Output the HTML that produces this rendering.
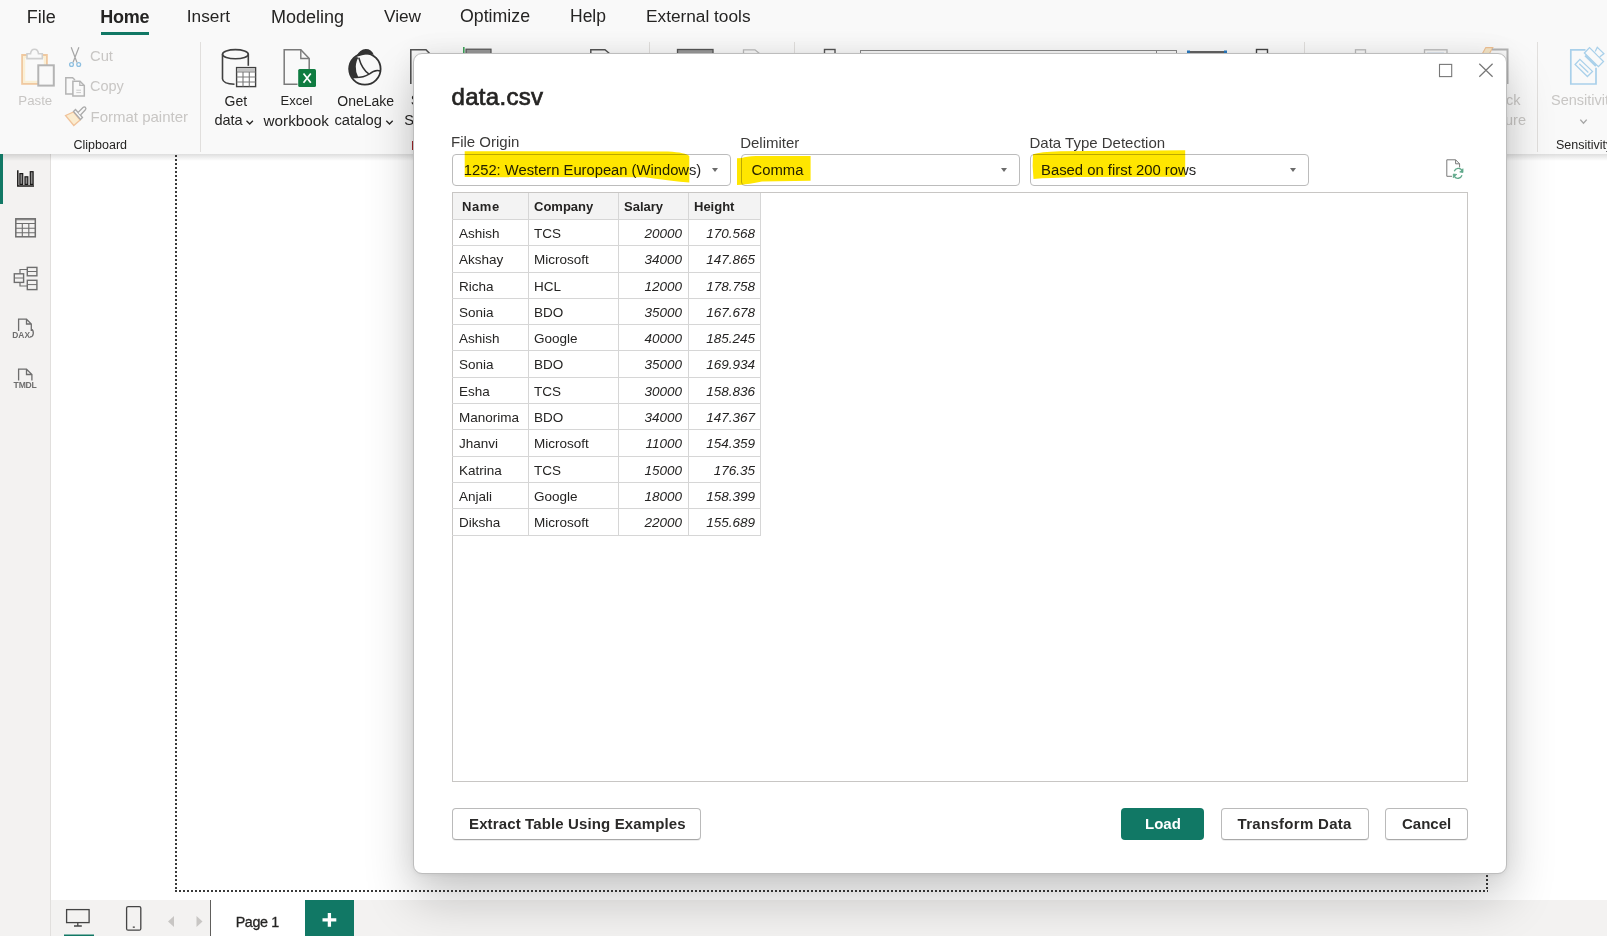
<!DOCTYPE html>
<html><head><meta charset="utf-8">
<style>
*{margin:0;padding:0;box-sizing:border-box;}
html,body{width:1607px;height:936px;overflow:hidden;}
body{position:relative;background:#fff;font-family:"Liberation Sans",sans-serif;color:#252423;}
.abs{position:absolute;}
.t{position:absolute;white-space:nowrap;line-height:1;}
#ribbon{position:absolute;left:0;top:0;width:1607px;height:154px;background:#f9f9f9;}
#ribshadow{position:absolute;left:0;top:154px;width:1607px;height:7px;background:linear-gradient(rgba(0,0,0,0.13),rgba(0,0,0,0));}
#sidebar{position:absolute;left:0;top:154px;width:51px;height:782px;background:#f3f2f1;border-right:1px solid #e1dfdd;}
#canvas{position:absolute;left:51px;top:154px;width:1556px;height:746px;background:#fff;}
#bottombar{position:absolute;left:51px;top:900px;width:1556px;height:36px;background:#f3f2f1;}
.sep{position:absolute;width:1px;background:#e1dfdd;}
.rt{position:absolute;white-space:nowrap;line-height:1;color:#c8c6c4;font-size:15px;}
.rd{position:absolute;white-space:nowrap;line-height:1;color:#252423;font-size:15px;}
#dialog{position:absolute;left:413px;top:53px;width:1094px;height:821px;background:#fff;border:1px solid #bdbdbd;border-radius:9px;
 box-shadow:0 26px 50px rgba(0,0,0,0.2),0 0 26px rgba(0,0,0,0.07),0 1px 4px rgba(0,0,0,0.06);}
.lbl{position:absolute;font-size:15px;color:#3b3a39;white-space:nowrap;line-height:1;}
.dd{position:absolute;top:154px;height:32px;border:1px solid #bcbcbc;border-radius:4px;background:#fff;}
.ddt{position:absolute;font-size:15px;color:#252423;white-space:nowrap;line-height:1;}
.arr{position:absolute;width:0;height:0;border-left:3.7px solid transparent;border-right:3.7px solid transparent;border-top:4.5px solid #6b6b6b;}
.btn{position:absolute;top:808px;height:32px;border:1px solid #bababa;border-bottom-color:#a8a8a8;border-radius:4px;background:#fff;box-shadow:0 1px 0.5px rgba(0,0,0,0.07);}
.btnt{position:absolute;font-weight:bold;font-size:15px;color:#2b2a29;white-space:nowrap;line-height:1;}
.hl{position:absolute;left:452px;width:309px;height:1px;background:#d6d6d6;}
.vl{position:absolute;top:193px;width:1px;height:342px;background:#d6d6d6;}
.th{position:absolute;font-weight:bold;font-size:13px;color:#252423;white-space:nowrap;line-height:1;}
.td{position:absolute;font-size:13.5px;color:#252423;white-space:nowrap;line-height:1;}
.tn{position:absolute;font-style:italic;font-size:13.5px;color:#252423;white-space:nowrap;line-height:1;}
</style></head>
<body>
<div id="ribbon"></div>
<div id="sidebar"></div>
<div id="canvas"></div>
<div id="ribshadow"></div>
<div id="bottombar"></div>

<!-- green active bar -->
<div class="abs" style="left:0;top:154px;width:3px;height:50px;background:#117865;"></div>
<!-- sidebar icons -->
<svg class="abs" style="left:0;top:154px;" width="51" height="250" viewBox="0 154 51 250">
 <path d="M17.8 170.3 V186 H34" fill="none" stroke="#1b1a19" stroke-width="1.5"/>
 <rect x="19.9" y="173.6" width="2.8" height="10.8" fill="#8a8a8a" stroke="#1b1a19" stroke-width="1.2"/>
 <rect x="25" y="176.8" width="2.8" height="7.6" fill="#8a8a8a" stroke="#1b1a19" stroke-width="1.2"/>
 <rect x="30.3" y="171.7" width="2.8" height="12.7" fill="#8a8a8a" stroke="#1b1a19" stroke-width="1.2"/>
 <rect x="15.8" y="218.8" width="19.5" height="18" fill="none" stroke="#6e6e6e" stroke-width="1.5"/>
 <path d="M16 223.5 H35 M16 228.3 H35 M16 232.8 H35 M22.3 223.5 V236.8 M28.8 223.5 V236.8" stroke="#6e6e6e" stroke-width="1.1"/>
 <path d="M16 219.8 H35" stroke="#6e6e6e" stroke-width="0.8"/>
 <rect x="14.3" y="273.8" width="9.3" height="8.6" fill="none" stroke="#6e6e6e" stroke-width="1.4"/>
 <path d="M14.3 278 H23.6" stroke="#6e6e6e" stroke-width="1"/>
 <rect x="27.3" y="267.4" width="9.6" height="8.4" fill="none" stroke="#6e6e6e" stroke-width="1.4"/>
 <path d="M27.3 271.5 H36.9" stroke="#6e6e6e" stroke-width="1"/>
 <rect x="27.3" y="280.3" width="9.6" height="9.3" fill="none" stroke="#6e6e6e" stroke-width="1.4"/>
 <path d="M27.3 284.6 H36.9" stroke="#6e6e6e" stroke-width="1"/>
 <path d="M20 273.8 V269.5 H27.3 M20 282.4 V286 H27.3" fill="none" stroke="#6e6e6e" stroke-width="1.2"/>
 <path d="M18.6 331 V319.2 H26.5 L31.3 324 V331 M26.5 319.2 V324 H31.3 M31.3 329 Q33.5 330 33.3 333.5 Q33 336.8 30 337" fill="none" stroke="#6e6e6e" stroke-width="1.3"/>
 <text x="12.3" y="338" font-family="Liberation Sans" font-weight="bold" font-size="8.4" fill="#6e6e6e">DAX</text>
 <path d="M18.6 380.5 V369.2 H26.5 L31.9 374.5 V380.5 M26.5 369.2 V374.5 H31.9" fill="none" stroke="#6e6e6e" stroke-width="1.3"/>
 <text x="13.6" y="388.2" font-family="Liberation Sans" font-weight="bold" font-size="8.6" fill="#6e6e6e" letter-spacing="-0.2">TMDL</text>
</svg>
<!-- dotted page border -->
<svg class="abs" style="left:0;top:0;" width="1607" height="936" viewBox="0 0 1607 936">
 <line x1="176" y1="155" x2="176" y2="892" stroke="#3a3a3a" stroke-width="2" stroke-dasharray="2 2"/>
 <line x1="175" y1="891" x2="1488" y2="891" stroke="#3a3a3a" stroke-width="2" stroke-dasharray="2 2"/>
 <line x1="1487" y1="155" x2="1487" y2="890" stroke="#3a3a3a" stroke-width="2" stroke-dasharray="2 2"/>
</svg>
<!-- bottom bar -->
<svg class="abs" style="left:51px;top:900px;" width="310" height="36" viewBox="51 900 310 36">
 <rect x="66.6" y="909.6" width="22.5" height="13" fill="none" stroke="#444" stroke-width="1.3"/>
 <path d="M77.8 922.6 V925.6 M74 926 H81.8" stroke="#444" stroke-width="1.3"/>
 <rect x="64" y="934.5" width="30" height="1.5" fill="#117865"/>
 <rect x="126.6" y="906.6" width="14.2" height="23.6" rx="1.5" fill="none" stroke="#444" stroke-width="1.3"/>
 <rect x="132.8" y="926.5" width="2" height="1.3" fill="#444"/>
 <path d="M174 916 L168 921.5 L174 927 Z" fill="#c8c6c4"/>
 <path d="M196.5 916 L202.5 921.5 L196.5 927 Z" fill="#c8c6c4"/>
 <rect x="210" y="900" width="1" height="36" fill="#605e5c"/>
 <rect x="211" y="900" width="94" height="36" fill="#fff"/>
 <rect x="305" y="900" width="49" height="36" fill="#117865"/>
 <path d="M322.5 919.9 H336.3 M329.4 913 V926.8" stroke="#fff" stroke-width="3.3"/>
</svg>
<div class="t" style="left:235.7px;top:915px;font-size:14.3px;letter-spacing:-0.35px;color:#252423;-webkit-text-stroke:0.3px #252423;">Page 1</div>

<!-- tabs -->
<div class="t" style="left:26.8px;top:7.8px;font-size:18px;">File</div>
<div class="t" style="left:100.3px;top:7.8px;font-size:18px;font-weight:bold;letter-spacing:-0.3px;">Home</div>
<div class="abs" style="left:101px;top:32px;width:48px;height:3px;background:#117865;"></div>
<div class="t" style="left:186.8px;top:7.8px;font-size:17.25px;">Insert</div>
<div class="t" style="left:271px;top:7.8px;font-size:18px;">Modeling</div>
<div class="t" style="left:384px;top:7.8px;font-size:17.25px;">View</div>
<div class="t" style="left:460px;top:7.8px;font-size:17.75px;">Optimize</div>
<div class="t" style="left:570px;top:7.8px;font-size:17.5px;">Help</div>
<div class="t" style="left:646px;top:7.8px;font-size:17.25px;">External tools</div>
<svg class="abs" style="left:0;top:0;" width="1607" height="154" viewBox="0 0 1607 154">
 <!-- separators -->
 <line x1="200.5" y1="42" x2="200.5" y2="152" stroke="#e1dfdd" stroke-width="1"/>
 <line x1="649.5" y1="42" x2="649.5" y2="152" stroke="#e1dfdd" stroke-width="1"/>
 <line x1="794.5" y1="42" x2="794.5" y2="152" stroke="#e1dfdd" stroke-width="1"/>
 <line x1="1304.5" y1="42" x2="1304.5" y2="152" stroke="#e1dfdd" stroke-width="1"/>
 <line x1="1537.5" y1="42" x2="1537.5" y2="152" stroke="#e1dfdd" stroke-width="1"/>
 <!-- paste -->
 <rect x="22.2" y="55" width="24.6" height="28.8" fill="#f9f9f9" stroke="#f0c9a0" stroke-width="2"/>
 <rect x="24.2" y="57" width="20.6" height="24.8" fill="none" stroke="#fbefd3" stroke-width="2"/>
 <rect x="38.3" y="65.3" width="15.5" height="20.3" fill="#f9f9f9" stroke="#b4b4b4" stroke-width="2"/>
 <path d="M27 58.6 V53.8 H30.5 Q31 49.3 34.5 49.3 Q38 49.3 38.5 53.8 H42.3 V58.6 Z" fill="#f9f9f9" stroke="#cfcfcf" stroke-width="1.6"/>
 <!-- cut -->
 <path d="M71.2 47.3 L77 62.5 M78.9 47.3 L73 62.5" stroke="#a6a6a6" stroke-width="1.2" fill="none"/>
 <circle cx="71.5" cy="64.5" r="1.9" fill="none" stroke="#8ebfe0" stroke-width="1.3"/>
 <circle cx="78.7" cy="64.5" r="1.9" fill="none" stroke="#8ebfe0" stroke-width="1.3"/>
 <!-- copy -->
 <path d="M73 94 H65.8 V77.8 H72.6 L75 80" fill="none" stroke="#b4b4b4" stroke-width="1.5"/>
 <path d="M72.9 81.2 H80 L84.3 85.5 V96 H72.9 Z" fill="#f9f9f9" stroke="#b4b4b4" stroke-width="1.5"/>
 <path d="M79.8 81.2 V85.3 H84.3" fill="none" stroke="#b4b4b4" stroke-width="1.2"/>
 <path d="M76.3 90.2 H81 M76.3 92.6 H81" stroke="#c4c4c4" stroke-width="0.9"/>
 <!-- format painter -->
 <path d="M65.5 115.5 L73.5 112 L80.2 120 L73.8 125.5 Z" fill="#fbeccf" stroke="#f0c29a" stroke-width="1.3"/>
 <path d="M73.5 111.5 L75.5 109.5 L82.5 117.5 L80.5 119.5 Z" fill="#f9f9f9" stroke="#ababab" stroke-width="1.3"/>
 <path d="M78 112.5 L83 107.5 Q84.5 106.2 85.5 107.5 Q86.5 108.7 85.2 110 L80.5 115" fill="#f9f9f9" stroke="#ababab" stroke-width="1.3"/>
 <!-- get data -->
 <path d="M222.5 54.2 V79 Q223 83.8 234.5 84.3" fill="none" stroke="#404040" stroke-width="1.6"/>
 <ellipse cx="235.4" cy="54.2" rx="12.9" ry="4.6" fill="none" stroke="#404040" stroke-width="1.6"/>
 <path d="M248.3 54.2 V65.8" fill="none" stroke="#404040" stroke-width="1.6"/>
 <rect x="236.6" y="67.6" width="19" height="19" fill="#fff" stroke="#404040" stroke-width="1.4"/>
 <rect x="237.3" y="68.3" width="17.6" height="3.2" fill="#c4c4c4"/>
 <path d="M236.6 72 H255.6 M236.6 77 H255.6 M236.6 82 H255.6 M243 72 V86.6 M249.3 72 V86.6" stroke="#7a7a7a" stroke-width="1.1"/>
 <!-- excel -->
 <path d="M297.5 84.2 H284.2 V49.8 H300.8 L309.2 58.5 V69" fill="none" stroke="#7a7a7a" stroke-width="1.5"/>
 <path d="M300.8 49.8 V58.5 H309.2" fill="none" stroke="#7a7a7a" stroke-width="1.4"/>
 <rect x="298.2" y="69" width="17.8" height="18" rx="1.5" fill="#107c41"/>
 <path d="M303.5 73.5 L310.8 82.8 M310.8 73.5 L303.5 82.8" stroke="#fff" stroke-width="1.7"/>
 <!-- onelake -->
 <circle cx="364.9" cy="69" r="15.7" fill="none" stroke="#333" stroke-width="1.8"/>
 <path d="M355.8 56.8 Q360 49 365.8 49 Q371.5 49 373.8 54.8 Q368 53.3 362 55.2 Q358 56.3 355.8 56.8 Z" fill="#333"/>
 <path d="M355.8 57 Q349 61 348.8 68.5 Q349 74.5 352.9 77.5 L358.3 77.3 Q355.5 72 355.8 66.5 Q356.2 60.5 358.5 57.5 Z" fill="#333"/>
 <path d="M358.8 57.8 Q362 69.5 369.1 74.2" fill="none" stroke="#333" stroke-width="1.5"/>
 <path d="M352.3 77.4 Q362 78.5 369.1 74.2 Q375 69 380.5 71" fill="none" stroke="#333" stroke-width="1.5"/>
 <!-- partially hidden icons behind dialog -->
 <path d="M410.8 84 V49.8 H426 L432 56" fill="none" stroke="#555" stroke-width="1.6"/>
 <rect x="463" y="47" width="1.6" height="6" fill="#3da45a"/>
 <rect x="466" y="49.2" width="25" height="5" fill="#999" stroke="#555" stroke-width="1.2"/>
 <path d="M590.8 54 V49.8 H605 L610 54" fill="none" stroke="#555" stroke-width="1.5"/>
 <rect x="677.5" y="49.5" width="35.5" height="5" fill="#9a9a9a" stroke="#555" stroke-width="1.3"/>
 <path d="M743.5 54 V49.8 H755 L760 54" fill="none" stroke="#bbb" stroke-width="1.3"/>
 <rect x="824.5" y="49.5" width="10.5" height="5" fill="none" stroke="#555" stroke-width="1.4"/>
 <rect x="860.5" y="50.5" width="316" height="4" fill="none" stroke="#888" stroke-width="1"/>
 <line x1="1156.5" y1="50" x2="1156.5" y2="54" stroke="#888"/>
 <line x1="1188" y1="52" x2="1226" y2="52" stroke="#333" stroke-width="1.4"/>
 <rect x="1187" y="50.5" width="3" height="3" fill="#2a7ac0"/>
 <rect x="1224" y="50.5" width="3" height="3" fill="#2a7ac0"/>
 <rect x="1256.5" y="49.5" width="11" height="5" fill="none" stroke="#444" stroke-width="1.4"/>
 <rect x="1355.5" y="49.8" width="10" height="5" fill="none" stroke="#bbb" stroke-width="1.3"/>
 <rect x="1424.5" y="49.8" width="22.5" height="5" fill="none" stroke="#bbb" stroke-width="1.3"/>
 <path d="M1427 53.3 H1444" stroke="#a9c6e2" stroke-width="1.2"/>
 <path d="M1482.3 53.8 L1485.8 47.6 L1492.8 47.6 L1489.3 53.8 Z" fill="#f6e7c8" stroke="#efc193" stroke-width="1.1"/>
 <path d="M1492 49.5 H1507.5 V84" fill="none" stroke="#b4b4b4" stroke-width="2"/>
 <!-- sensitivity icon -->
 <path d="M1585.5 49.9 H1570.8 V84 H1596 V67.7" fill="none" stroke="#a9d0ea" stroke-width="1.7"/>
 <path d="M1575.1 64.5 L1579.9 59.4 L1592.5 71.4 L1587.4 76.5 Z" fill="none" stroke="#a9d0ea" stroke-width="1.3"/>
 <path d="M1579.3 63.7 L1588.3 72.5" stroke="#a9d0ea" stroke-width="1.2"/>
 <path d="M1584.4 53 L1589.5 47.6 L1603.5 61.5 L1598.4 66.6 Z" fill="#f9f9f9" stroke="#a9d0ea" stroke-width="1.3"/>
 <path d="M1585.2 55.5 L1596 66" stroke="#a9d0ea" stroke-width="2.2"/>
 <path d="M1595.2 51.5 L1597.3 47.3 L1603.9 53.6 L1599.6 57" fill="#f9f9f9" stroke="#a9d0ea" stroke-width="1.3"/>
 <path d="M1580.3 119.6 L1583.5 123.3 L1586.7 119.6" fill="none" stroke="#a6a6a6" stroke-width="1.4"/>
 <!-- chevrons -->
 <path d="M246.5 120.8 L249.7 124 L252.9 120.8" fill="none" stroke="#252423" stroke-width="1.3"/>
 <path d="M386.3 120.8 L389.5 124 L392.7 120.8" fill="none" stroke="#252423" stroke-width="1.3"/>
</svg>

<div class="rt" style="left:18.3px;top:94.2px;font-size:13.25px;">Paste</div>
<div class="rt" style="left:90px;top:49.1px;font-size:14.75px;">Cut</div>
<div class="rt" style="left:90px;top:79.3px;font-size:14.5px;">Copy</div>
<div class="rt" style="left:90.5px;top:109.0px;font-size:15px;">Format painter</div>
<div class="rd" style="left:73.5px;top:138.6px;font-size:12.5px;">Clipboard</div>
<div class="rd" style="left:224.6px;top:93.5px;font-size:14px;">Get</div>
<div class="rd" style="left:214.4px;top:113.3px;font-size:14.5px;">data</div>
<div class="rd" style="left:280.6px;top:94.4px;font-size:13px;">Excel</div>
<div class="rd" style="left:263.6px;top:112.7px;font-size:15.25px;">workbook</div>
<div class="rd" style="left:337.3px;top:93.5px;font-size:14px;">OneLake</div>
<div class="rd" style="left:334.4px;top:113.1px;font-size:14.75px;">catalog</div>
<div class="rd" style="left:410.8px;top:93.1px;font-size:14.5px;">S</div>
<div class="abs" style="left:412px;top:141px;width:1.5px;height:9px;background:#a4262c;"></div>
<div class="rd" style="left:404.3px;top:113.3px;font-size:14.5px;">Se</div>
<div class="rt" style="left:1506px;top:93.1px;font-size:14.5px;">ck</div>
<div class="rt" style="left:1505px;top:113.3px;font-size:14.5px;">ure</div>
<div class="rt" style="left:1551px;top:93.1px;font-size:14.5px;">Sensitivity</div>
<div class="rd" style="left:1556px;top:139.1px;font-size:12.5px;">Sensitivity</div>

<!-- dialog -->
<div id="dialog"></div>
<div class="t" style="left:451.5px;top:84.6px;font-size:24px;color:#252423;-webkit-text-stroke:0.7px #252423;letter-spacing:0.3px;">data.csv</div>
<div class="lbl" style="left:451px;top:134.3px;">File Origin</div>
<div class="lbl" style="left:740.2px;top:135px;">Delimiter</div>
<div class="lbl" style="left:1029.5px;top:135px;">Data Type Detection</div>
<div class="dd" style="left:452px;width:279px;"></div>
<div class="dd" style="left:741px;width:279px;"></div>
<div class="dd" style="left:1030px;width:279px;"></div>
<!--HIGHLIGHT-->
<div class="ddt" style="left:463.8px;top:162.5px;font-size:14.75px;">1252: Western European (Windows)</div>
<div class="ddt" style="left:751.5px;top:163.4px;font-size:14.85px;">Comma</div>
<div class="ddt" style="left:1041px;top:163.4px;font-size:14.85px;">Based on first 200 rows</div>
<div class="arr" style="left:712px;top:168px;"></div>
<div class="arr" style="left:1001px;top:168px;"></div>
<div class="arr" style="left:1290px;top:168px;"></div>
<div class="abs" style="left:452px;top:192px;width:1016px;height:590px;border:1px solid #c8c6c4;"></div>
<div class="abs" style="left:453px;top:193px;width:307px;height:26px;background:#f3f3f3;"></div>
<div class="hl" style="top:219px;"></div>
<div class="hl" style="top:245px;"></div>
<div class="hl" style="top:272px;"></div>
<div class="hl" style="top:298px;"></div>
<div class="hl" style="top:324px;"></div>
<div class="hl" style="top:350px;"></div>
<div class="hl" style="top:377px;"></div>
<div class="hl" style="top:403px;"></div>
<div class="hl" style="top:429px;"></div>
<div class="hl" style="top:456px;"></div>
<div class="hl" style="top:482px;"></div>
<div class="hl" style="top:508px;"></div>
<div class="hl" style="top:535px;"></div>
<div class="vl" style="left:528px;"></div>
<div class="vl" style="left:618px;"></div>
<div class="vl" style="left:688px;"></div>
<div class="vl" style="left:760px;"></div>
<div class="th" style="left:462px;top:199.7px;letter-spacing:0.6px;">Name</div>
<div class="th" style="left:534px;top:199.7px;">Company</div>
<div class="th" style="left:624px;top:199.7px;">Salary</div>
<div class="th" style="left:694px;top:199.7px;">Height</div>
<div class="td" style="left:459px;top:226.9px;">Ashish</div>
<div class="td" style="left:534px;top:226.9px;">TCS</div>
<div class="tn" style="right:925px;top:226.9px;">20000</div>
<div class="tn" style="right:852px;top:226.9px;">170.568</div>
<div class="td" style="left:459px;top:253.2px;">Akshay</div>
<div class="td" style="left:534px;top:253.2px;">Microsoft</div>
<div class="tn" style="right:925px;top:253.2px;">34000</div>
<div class="tn" style="right:852px;top:253.2px;">147.865</div>
<div class="td" style="left:459px;top:279.5px;">Richa</div>
<div class="td" style="left:534px;top:279.5px;">HCL</div>
<div class="tn" style="right:925px;top:279.5px;">12000</div>
<div class="tn" style="right:852px;top:279.5px;">178.758</div>
<div class="td" style="left:459px;top:305.8px;">Sonia</div>
<div class="td" style="left:534px;top:305.8px;">BDO</div>
<div class="tn" style="right:925px;top:305.8px;">35000</div>
<div class="tn" style="right:852px;top:305.8px;">167.678</div>
<div class="td" style="left:459px;top:332.1px;">Ashish</div>
<div class="td" style="left:534px;top:332.1px;">Google</div>
<div class="tn" style="right:925px;top:332.1px;">40000</div>
<div class="tn" style="right:852px;top:332.1px;">185.245</div>
<div class="td" style="left:459px;top:358.4px;">Sonia</div>
<div class="td" style="left:534px;top:358.4px;">BDO</div>
<div class="tn" style="right:925px;top:358.4px;">35000</div>
<div class="tn" style="right:852px;top:358.4px;">169.934</div>
<div class="td" style="left:459px;top:384.7px;">Esha</div>
<div class="td" style="left:534px;top:384.7px;">TCS</div>
<div class="tn" style="right:925px;top:384.7px;">30000</div>
<div class="tn" style="right:852px;top:384.7px;">158.836</div>
<div class="td" style="left:459px;top:411.0px;">Manorima</div>
<div class="td" style="left:534px;top:411.0px;">BDO</div>
<div class="tn" style="right:925px;top:411.0px;">34000</div>
<div class="tn" style="right:852px;top:411.0px;">147.367</div>
<div class="td" style="left:459px;top:437.3px;">Jhanvi</div>
<div class="td" style="left:534px;top:437.3px;">Microsoft</div>
<div class="tn" style="right:925px;top:437.3px;">11000</div>
<div class="tn" style="right:852px;top:437.3px;">154.359</div>
<div class="td" style="left:459px;top:463.6px;">Katrina</div>
<div class="td" style="left:534px;top:463.6px;">TCS</div>
<div class="tn" style="right:925px;top:463.6px;">15000</div>
<div class="tn" style="right:852px;top:463.6px;">176.35</div>
<div class="td" style="left:459px;top:489.9px;">Anjali</div>
<div class="td" style="left:534px;top:489.9px;">Google</div>
<div class="tn" style="right:925px;top:489.9px;">18000</div>
<div class="tn" style="right:852px;top:489.9px;">158.399</div>
<div class="td" style="left:459px;top:516.2px;">Diksha</div>
<div class="td" style="left:534px;top:516.2px;">Microsoft</div>
<div class="tn" style="right:925px;top:516.2px;">22000</div>
<div class="tn" style="right:852px;top:516.2px;">155.689</div><div class="btn" style="left:452px;width:249px;"></div>
<div class="btnt" style="left:469px;top:816.1px;letter-spacing:0.13px;">Extract Table Using Examples</div>
<div class="abs" style="left:1121px;top:808px;width:83px;height:32px;background:#117865;border-radius:4px;"></div>
<div class="btnt" style="left:1145px;top:816.1px;color:#fff;">Load</div>
<div class="btn" style="left:1221px;width:148px;"></div>
<div class="btnt" style="left:1237.5px;top:816.1px;letter-spacing:0.3px;">Transform Data</div>
<div class="btn" style="left:1385px;width:83px;"></div>
<div class="btnt" style="left:1402px;top:816.1px;">Cancel</div>
<svg class="abs" style="left:1400px;top:55px;" width="100" height="130" viewBox="1400 55 100 130">
 <rect x="1439.5" y="64.4" width="12.2" height="12.2" fill="none" stroke="#777" stroke-width="1.1"/>
 <path d="M1479.3 63.8 L1492.6 76.8 M1492.6 63.8 L1479.3 76.8" stroke="#777" stroke-width="1.2"/>
 <path d="M1452 176.3 H1446.8 V159.8 H1455.6 L1459.6 163.8 V167.5" fill="none" stroke="#7a7a7a" stroke-width="1"/>
 <path d="M1455.6 159.8 V163.8 H1459.6" fill="none" stroke="#7a7a7a" stroke-width="1"/>
 <path d="M1454.3 171.3 A4.3 4.3 0 0 1 1462 170.3" fill="none" stroke="#5fa88a" stroke-width="1.3"/>
 <path d="M1463 168.5 L1463 172.5 L1459.5 172" fill="#5fa88a" stroke="#5fa88a" stroke-width="0.8"/>
 <path d="M1462 175.3 A4.3 4.3 0 0 1 1454.3 176.3" fill="none" stroke="#5fa88a" stroke-width="1.3"/>
 <path d="M1453.3 178 L1453.3 174 L1457 174.5" fill="#5fa88a" stroke="#5fa88a" stroke-width="0.8"/>
</svg>
<svg class="abs" style="left:0;top:0;mix-blend-mode:multiply;" width="1607" height="200" viewBox="0 0 1607 200">
 <path d="M464.7 151.3 L668 151.5 Q686 152.5 689.3 156 L689.3 182.5 Q672 181 645 177.2 L464.7 177.1 Z" fill="#ffe600"/>
 <path d="M737 158.2 L742 158 Q746 156.3 756 156 L810.6 156 L810.6 180.8 L762 181.5 Q748 184.2 742 184.8 L737 184.9 Z" fill="#ffe600"/>
 <path d="M1033 154.3 Q1040 151.8 1060 151.3 L1185.2 150.2 L1185.2 176.7 L1076 177.1 Q1050 178 1033.5 178.9 Q1032 166 1033 154.3 Z" fill="#ffe600"/>
</svg>
</body></html>
